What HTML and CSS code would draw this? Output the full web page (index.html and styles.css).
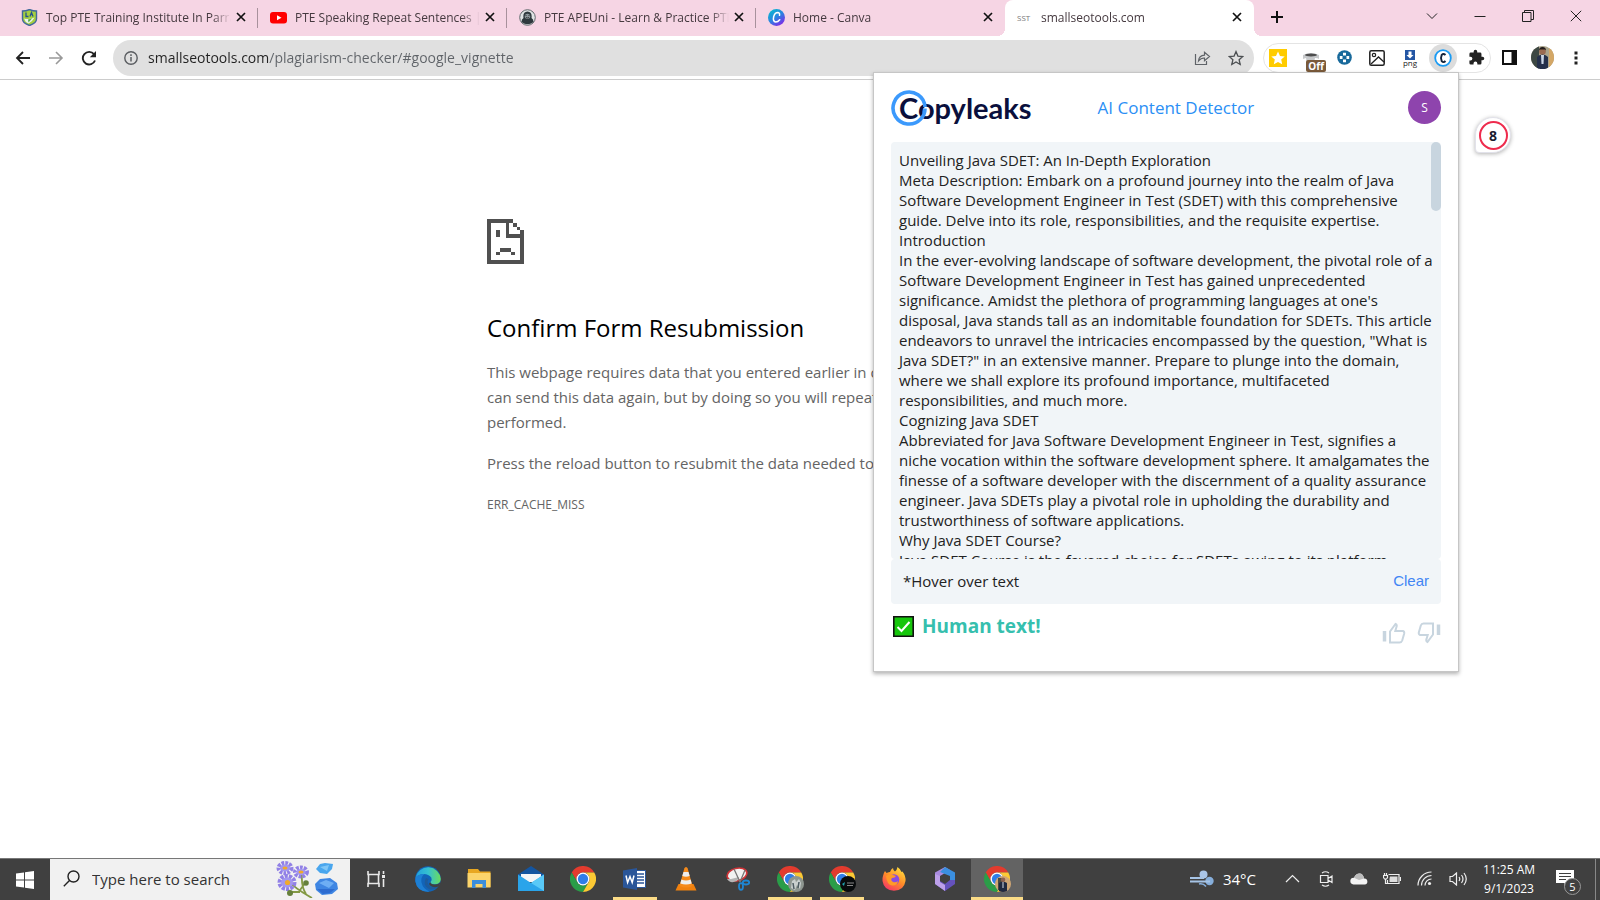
FILE: index.html
```html
<!DOCTYPE html>
<html lang="en">
  <head>
    <meta charset="UTF-8" />
    <meta name="viewport" content="width=device-width, initial-scale=1.0" />
    <title>smallseotools.com</title>
    <link rel="stylesheet" href="styles.css" />
  </head>

  <body>
    <!-- Shared icons -->
    <svg class="sprite" aria-hidden="true">
      <symbol id="icon-close" viewBox="0 0 14 14">
        <path d="M3 3l8 8M11 3l-8 8" fill="none" stroke="#111" stroke-width="1.7" />
      </symbol>
      <symbol id="icon-chrome" viewBox="0 0 48 48">
        <path fill="#e33b2e" d="M24 12h20.8A24 24 0 0 0 3.2 12l10.4 18A12 12 0 0 1 24 12z" />
        <path fill="#2a9d48" d="M34.4 30L24 48A24 24 0 0 1 3.2 12l10.4 18a12 12 0 0 0 20.8 0z" />
        <path fill="#fcc934" d="M24 12h20.8A24 24 0 0 1 24 48l10.4-18A12 12 0 0 0 24 12z" />
        <circle cx="24" cy="24" r="12" fill="#fff" />
        <circle cx="24" cy="24" r="9.5" fill="#2f7de9" />
      </symbol>
    </svg>

    <!-- Tab strip -->
    <header class="tab-strip">
      <div class="tab">
        <svg class="favicon" viewBox="0 0 17 17">
          <path d="M1.500 2Q5 2 8.500.5 12 2 15.500 2v8q0 4-7 6.500Q1.500 14 1.500 10z" fill="#a6cf3f" stroke="#41699c" stroke-width="1.400" />
          <path d="M5 3.500v4h2.500M9 7.500l1.500-4 1.500 4" fill="none" stroke="#24528f" stroke-width="1.300" />
          <path d="M3 9.500q5 1.500 10.500-1-2 4-6 6-3.500-1.500-4.500-5z" fill="#e8f4ee" />
          <path d="M7 10.500l4-1-3.500 4z" fill="#4fa64a" />
        </svg>
        <span class="tab-title">Top PTE Training Institute In Parramatta</span>
        <button class="tab-close" aria-label="Close tab"><svg><use href="#icon-close" /></svg></button>
      </div>
      <div class="tab">
        <svg class="favicon" viewBox="0 0 17 17">
          <rect y="3" width="17" height="11.500" rx="3" fill="#f00" />
          <path d="M7 6.200l4.500 2.500L7 11.200z" fill="#fff" />
        </svg>
        <span class="tab-title">PTE Speaking Repeat Sentences | September</span>
        <button class="tab-close" aria-label="Close tab"><svg><use href="#icon-close" /></svg></button>
      </div>
      <div class="tab">
        <svg class="favicon" viewBox="0 0 17 17">
          <circle cx="8.500" cy="8.500" r="7.800" fill="#dfe3e4" stroke="#60686c" />
          <path d="M2.500 13q0-3 2-4-1-6 4-6.500 5 .5 4 6.500 2 1 2 4-6 4.500-12 0z" fill="#2e383d" />
          <ellipse cx="8.500" cy="7.300" rx="2.700" ry="2.600" fill="#8b969b" />
          <path d="M6.500 6.500h1M9.500 6.500h1M7 8.500q1.500 1 3 0" stroke="#222" fill="none" stroke-width=".8" />
        </svg>
        <span class="tab-title">PTE APEUni - Learn &amp; Practice PTE Online</span>
        <button class="tab-close" aria-label="Close tab"><svg><use href="#icon-close" /></svg></button>
      </div>
      <div class="tab tab-last">
        <svg class="favicon" viewBox="0 0 17 17">
          <defs>
            <linearGradient id="canva" x1="0" y1="0" x2=".7" y2="1">
              <stop offset="0" stop-color="#00c4cc" />
              <stop offset=".55" stop-color="#2b84e0" />
              <stop offset="1" stop-color="#7d2ae8" />
            </linearGradient>
          </defs>
          <circle cx="8.500" cy="8.500" r="8.500" fill="url(#canva)" />
          <path d="M11.500 6.300Q12 4 10 3.600 7 3.500 5.700 7.500 4.600 12.500 7.700 13 10 13 11.700 10.700" fill="none" stroke="#fff" stroke-width="1.500" stroke-linecap="round" />
        </svg>
        <span class="tab-title">Home - Canva</span>
        <button class="tab-close" aria-label="Close tab"><svg><use href="#icon-close" /></svg></button>
      </div>
      <div class="tab tab-active">
        <span class="favicon favicon-text">SST</span>
        <span class="tab-title">smallseotools.com</span>
        <button class="tab-close" aria-label="Close tab"><svg><use href="#icon-close" /></svg></button>
      </div>
      <button class="new-tab" aria-label="New tab">
        <svg width="14" height="14" viewBox="0 0 14 14"><path d="M7 1v12M1 7h12" stroke="#111" stroke-width="2" /></svg>
      </button>
      <div class="window-buttons">
        <button aria-label="Search tabs"><svg width="12" height="12" viewBox="0 0 12 12"><path d="M1 3.500l5 5 5-5" /></svg></button>
        <button aria-label="Minimize"><svg width="12" height="12" viewBox="0 0 12 12"><path d="M.5 6.500h11" /></svg></button>
        <button aria-label="Restore"><svg width="12" height="12" viewBox="0 0 12 12"><path d="M.5 2.500h8.500v9H.5zM2.500 2.500V.5h9v9H9" /></svg></button>
        <button aria-label="Close"><svg width="12" height="12" viewBox="0 0 12 12"><path d="M.8.8l10.400 10.400M11.200.8L.8 11.200" /></svg></button>
      </div>
    </header>

    <!-- Toolbar -->
    <nav class="toolbar">
      <div class="nav-buttons">
        <button aria-label="Back"><svg width="16" height="16" viewBox="0 0 16 16"><path d="M15 8H2M8 2L2 8l6 6" fill="none" stroke="#222" stroke-width="1.800" /></svg></button>
        <button aria-label="Forward"><svg width="16" height="16" viewBox="0 0 16 16"><path d="M1 8h13M8 2l6 6-6 6" fill="none" stroke="#999" stroke-width="1.600" /></svg></button>
        <button aria-label="Reload"><svg width="16" height="16" viewBox="0 0 16 16"><path d="M14 10.500A6.300 6.300 0 1 1 13 4.200" fill="none" stroke="#222" stroke-width="1.900" /><path d="M15 1v6.200H8.800z" fill="#222" /></svg></button>
      </div>
      <div class="address-bar">
        <svg width="14" height="14" viewBox="0 0 14 14"><circle cx="7" cy="7" r="6.200" fill="none" stroke="#5a5d61" stroke-width="1.400" /><path d="M7 6v4.500M7 3.300v1.600" stroke="#5a5d61" stroke-width="1.500" /></svg>
        <input class="url" type="text" aria-label="Address" value="smallseotools.com/plagiarism-checker/#google_vignette" />
        <button aria-label="Share"><svg width="17" height="17" viewBox="0 0 17 17"><path d="M1.500 5v10.500h11V12M4.500 12q.5-5.500 6-5.800V3.300L15.500 7.500l-5 4.200V9q-3.500-.2-6 3z" fill="none" stroke="#5f6368" stroke-width="1.200" /></svg></button>
        <button aria-label="Bookmark this tab"><svg width="16" height="16" viewBox="0 0 16 16"><path d="M8 1.600l1.900 4.500 4.900.4-3.700 3.200 1.100 4.800L8 11.900l-4.200 2.600 1.100-4.800L1.200 6.500l4.900-.4z" fill="none" stroke="#4c4f52" stroke-width="1.300" /></svg></button>
      </div>
      <div class="extensions">
        <button aria-label="Star extension"><svg width="18" height="18" viewBox="0 0 18 18"><path d="M0 0h18v18H0z" fill="#fc0" /><path d="M9 2.500l2 4.400 4.700.5-3.500 3.200 1 4.700L9 12.900l-4.200 2.400 1-4.700-3.500-3.200L7 6.900z" fill="#fff" /></svg></button>
        <button class="off-button" aria-label="Tracker, off">
          <svg width="18" height="12" viewBox="0 0 18 12"><path d="M1 3q8-4 16 0v4q-1-1-4-1l-1 5H5L4 6 1 7z" fill="#c7c9cb" /><ellipse cx="9" cy="3" rx="6" ry="1.500" fill="#4d4d4d" /></svg>
          <span class="off-badge">Off</span>
        </button>
        <button aria-label="Move extension"><svg width="15" height="15" viewBox="0 0 15 15"><circle cx="7.500" cy="7.500" r="7.300" fill="#17699b" /><path d="M6 2.800h3v2.700H6zM6 9.500h3v2.700H6zM2.800 6h2.700v3H2.800zM9.500 6h2.700v3H9.500z" fill="#fff" /></svg></button>
        <button aria-label="Image extension"><svg width="16" height="16" viewBox="0 0 16 16"><rect x=".8" y=".8" width="14.400" height="14.400" rx="1.500" fill="none" stroke="#222" stroke-width="1.500" /><circle cx="5" cy="5" r="1.700" fill="none" stroke="#222" stroke-width="1.200" /><path d="M2 14l7.500-7L15 12" fill="none" stroke="#222" stroke-width="1.300" /></svg></button>
        <button class="png-button" aria-label="Save as png">
          <svg width="10" height="10" viewBox="0 0 10 10"><path d="M0 0h10v10H0z" fill="#2456a4" /><path d="M3.500 1.500h3V5h2L5 8.500 1.500 5h2z" fill="#fff" /></svg>
          <span>png</span>
        </button>
        <button class="extension-active" aria-label="Copyleaks"><svg width="18" height="18" viewBox="0 0 18 18"><circle cx="9" cy="9" r="7.800" fill="#fff" stroke="#1a9bf4" stroke-width="1.800" /><path d="M11.500 6Q9.500 4 7.700 5.800q-1.400 3.200 0 6.300 1.800 2 3.800-.1" fill="none" stroke="#12233c" stroke-width="1.900" /></svg></button>
        <button aria-label="Extensions"><svg width="17" height="17" viewBox="0 0 24 24"><path d="M20.500 11H19V7a2 2 0 0 0-2-2h-4V3.500a2.500 2.500 0 0 0-5 0V5H4a2 2 0 0 0-2 2v3.800h1.500a2.700 2.700 0 0 1 0 5.400H2V20a2 2 0 0 0 2 2h3.800v-1.500a2.700 2.700 0 0 1 5.400 0V22H17a2 2 0 0 0 2-2v-4h1.500a2.500 2.500 0 0 0 0-5z" fill="#222" /></svg></button>
      </div>
      <div class="browser-menu">
        <button aria-label="Side panel"><svg width="15" height="15" viewBox="0 0 15 15"><path d="M1 1h13v13H1z" fill="none" stroke="#111" stroke-width="2" /><path d="M9.500 0H15v15H9.500z" fill="#111" /></svg></button>
        <button aria-label="Profile">
          <svg width="23" height="23" viewBox="0 0 23 23">
            <clipPath id="profile-clip"><circle cx="11.500" cy="11.500" r="11.500" /></clipPath>
            <g clip-path="url(#profile-clip)">
              <path d="M0 0h23v23H0z" fill="#aaa38b" />
              <path d="M0 0h8v23H0z" fill="#3d4843" />
              <path d="M18 0h5v23h-5z" fill="#d4a766" />
              <circle cx="11.500" cy="5.500" r="3.300" fill="#9a6a50" />
              <path d="M8 4.500Q8 1 11.500 1T15 4.500l-1-1H9z" fill="#221c1b" />
              <path d="M6 23V11q2-2.500 5.500-2.500T17 11v12z" fill="#25304b" />
              <path d="M10 9h3l-.5 9h-2z" fill="#cbd6e6" />
            </g>
          </svg>
        </button>
        <button aria-label="Customize and control"><svg width="4" height="16" viewBox="0 0 4 16"><path d="M.5 1.500h3v3h-3zM.5 6.500h3v3h-3zM.5 11.500h3v3h-3z" fill="#222" /></svg></button>
      </div>
    </nav>

    <!-- Page -->
    <main class="page">
      <div class="error-content">
        <svg class="error-icon" width="37" height="45" viewBox="0 0 20 24" shape-rendering="crispEdges">
          <path fill="#505050" d="M0 0h14v2h-2v6h8V6h0v18H0zM2 2v20h16V10h-8V2z" fill-rule="evenodd" />
          <path fill="#505050" d="M14 2h2v2h-2zM16 4h2v2h-2zM18 6h2v2h-2zM5 6h2v3.500H5zM7 15.500h6v2H7zM5 17.500h2v2H5zM13 17.500h2v2h-2z" />
        </svg>
        <h1>Confirm Form Resubmission</h1>
        <p>
          This webpage requires data that you entered earlier in order to be properly displayed. You<br />
          can send this data again, but by doing so you will repeat any action this page previously<br />
          performed.
        </p>
        <p>Press the reload button to resubmit the data needed to load the page.</p>
        <div class="error-code">ERR_CACHE_MISS</div>
      </div>
    </main>

    <!-- Floating counter -->
    <button class="counter"><span class="counter-ring">8</span><span class="counter-grip"></span></button>

    <!-- Copyleaks popup -->
    <section class="popup">
      <div class="popup-header">
        <div class="logo">
          <span class="logo-text">Copyleaks</span>
          <svg class="logo-ring" width="36" height="36" viewBox="0 0 36 36"><path d="M34 17A16 16 0 1 0 29.500 29.200Q34 25 34 18.500" fill="none" stroke="#3b99fc" stroke-width="3.600" /></svg>
        </div>
        <h2>AI Content Detector</h2>
        <button class="user-avatar">S</button>
      </div>
      <div class="result-text">
        <p>Unveiling Java SDET: An In-Depth Exploration</p>
        <p>
          Meta Description: Embark on a profound journey into the realm of Java<br />
          Software Development Engineer in Test (SDET) with this comprehensive<br />
          guide. Delve into its role, responsibilities, and the requisite expertise.
        </p>
        <p>Introduction</p>
        <p>
          In the ever-evolving landscape of software development, the pivotal role of a<br />
          Software Development Engineer in Test has gained unprecedented<br />
          significance. Amidst the plethora of programming languages at one's<br />
          disposal, Java stands tall as an indomitable foundation for SDETs. This article<br />
          endeavors to unravel the intricacies encompassed by the question, "What is<br />
          Java SDET?" in an extensive manner. Prepare to plunge into the domain,<br />
          where we shall explore its profound importance, multifaceted<br />
          responsibilities, and much more.
        </p>
        <p>Cognizing Java SDET</p>
        <p>
          Abbreviated for Java Software Development Engineer in Test, signifies a<br />
          niche vocation within the software development sphere. It amalgamates the<br />
          finesse of a software developer with the discernment of a quality assurance<br />
          engineer. Java SDETs play a pivotal role in upholding the durability and<br />
          trustworthiness of software applications.
        </p>
        <p>Why Java SDET Course?</p>
        <p>Java SDET Course is the favored choice for SDETs owing to its platform</p>
        <span class="scroll-thumb"></span>
      </div>
      <div class="result-footer">
        <span>*Hover over text</span>
        <button class="clear">Clear</button>
      </div>
      <div class="verdict">
        <svg width="21" height="21" viewBox="0 0 21 21"><path d="M.8.8h19.400v19.400H.8z" fill="#16c60c" stroke="#111" stroke-width="1.600" /><path d="M4.500 11l4 4 8-9" fill="none" stroke="#fff" stroke-width="2" /></svg>
        <strong>Human text!</strong>
        <div class="votes">
          <button aria-label="Thumbs up"><svg width="24" height="22" viewBox="0 0 24 22"><path d="M2.500 9v10.500" stroke-width="3.500" /><path d="M8 9.500l5.500-7.500q2 1 .8 3.500l-1 3.500H21q1.500.5 1.200 2.500l-2 7q-.7 2-2.700 2H8z" stroke-width="2" /></svg></button>
          <button aria-label="Thumbs down"><svg width="24" height="22" viewBox="0 0 24 22"><g transform="rotate(180 12 11)"><path d="M2.500 9v10.500" stroke-width="3.500" /><path d="M8 9.500l5.500-7.500q2 1 .8 3.500l-1 3.500H21q1.500.5 1.200 2.500l-2 7q-.7 2-2.700 2H8z" stroke-width="2" /></g></svg></button>
        </div>
      </div>
    </section>

    <!-- Taskbar -->
    <footer class="taskbar">
      <button class="start" aria-label="Start"><svg width="18" height="18" viewBox="0 0 18 18"><path d="M0 2.500L8 1.400V8.500H0zM9 1.200L18 0v8.500H9zM0 9.500h8v7.100L0 15.500zM9 9.500h9V18l-9-1.200z" fill="#fff" /></svg></button>
      <div class="search">
        <svg width="17" height="17" viewBox="0 0 17 17"><circle cx="10.500" cy="6.500" r="5.500" fill="none" stroke="#222" stroke-width="1.400" /><path d="M6.500 10.500L.8 16.200" stroke="#222" stroke-width="1.400" /></svg>
        <input type="text" aria-label="Search" placeholder="Type here to search" />
        <svg class="flowers" width="66" height="38" viewBox="0 0 66 38">
          <path d="M14 20q6 8 24 18M28 14q-1 12 4 20M32 22l-6 8M16 32l10 0" fill="none" stroke="#839944" stroke-width="1.800" />
          <g stroke="#9180e6" fill="none" stroke-width="5">
            <ellipse cx="11" cy="8" rx="6" ry="4.500" stroke-dasharray="2.500 1" />
            <ellipse cx="27" cy="12" rx="5.500" ry="4" stroke-dasharray="2.500 1" />
            <ellipse cx="13" cy="22.500" rx="7" ry="6" stroke-dasharray="3 1" />
          </g>
          <g fill="#a397f0"><ellipse cx="11" cy="8" rx="5" ry="3.500" /><ellipse cx="27" cy="12" rx="4.500" ry="3" /><ellipse cx="13" cy="22.500" rx="6" ry="5" /></g>
          <g fill="#f0a92c"><ellipse cx="11" cy="8" rx="2.500" ry="1.500" /><ellipse cx="27" cy="12" rx="2.500" ry="1.500" /><circle cx="13.500" cy="22.500" r="2.600" /></g>
          <g fill="#66803c"><circle cx="32" cy="23" r="2.800" /><circle cx="16" cy="33" r="3" /></g>
          <path d="M42 9l4-5 5-1 8 1-1 5-5 5-7-1z" fill="#49a6ee" /><path d="M46 7l9-2-2 6z" fill="#7fc6f7" />
          <path d="M41 24l5-5 10-1 7 5 1 6-6 5-10 1-6-5z" fill="#3f86e3" /><path d="M45 23l7-3 8 3-5 5z" fill="#6eaef4" /><path d="M43 29l11 0 7 0-5 4-7 1z" fill="#2d6cd0" />
        </svg>
      </div>
      <div class="apps">
        <button aria-label="Task view"><svg width="18" height="18" viewBox="0 0 18 18"><path d="M1 1v3.500h11V1M1 17v-3.500h11V17M1.500 4.500v9M11.500 4.500v9M16.500 1v3M16.500 9v8" fill="none" stroke="#e8e8e8" stroke-width="1.600" /><path d="M15 5h3v3h-3z" fill="#e8e8e8" /></svg></button>
        <button aria-label="Edge">
          <svg width="26" height="26" viewBox="0 0 26 26">
            <defs><linearGradient id="edge-wave"><stop offset="0" stop-color="#22a0dc" /><stop offset=".5" stop-color="#35c1d1" /><stop offset="1" stop-color="#6bdc5c" /></linearGradient></defs>
            <circle cx="13" cy="13" r="12.800" fill="#1264b8" />
            <path d="M.5 11.500A12.800 12.800 0 0 1 25.800 13q-.3 5-5.300 5.300-5 .2-5-2 2-2.300.8-4.700Q13.500 8 9 8 4 8 .5 11.500z" fill="url(#edge-wave)" />
            <path d="M.5 11.500Q4 7.500 9.500 8q-4 3-3 8.500 1.500 6.500 8 9.100Q2 26.500.3 15z" fill="#1d7fd4" />
            <path d="M11 12q-4 7 3 11 5 2 10-3-5 2.500-9 0-4-3-1.500-7z" fill="#3f4145" opacity=".25" />
            <path d="M15.500 16.300q0 2 4 2.200 4 .2 6-2.500-1 3-2 4.500-5 2-8.500-1-2-2 .5-3.200z" fill="#404040" />
          </svg>
        </button>
        <button aria-label="File Explorer"><svg width="24" height="21" viewBox="0 0 24 21"><path d="M1 1h10l2 2.500h10.500V19H1z" fill="#e8a721" /><path d="M.5 5h23v14.500H.5z" fill="#fbd46b" /><path d="M5 12h14v8h-3.500v-4h-7v4H5z" fill="#3c8edb" /></svg></button>
        <button aria-label="Mail"><svg width="26" height="25" viewBox="0 0 26 25"><path d="M0 8.500L13 0l13 8.500v3H0z" fill="#1455a0" /><path d="M3 8h20v8H3z" fill="#f4f5f7" /><path d="M0 8.500L13 17l13-8.500V25H0z" fill="#2aa4ea" /><path d="M26 8.500V25L9 14.500l4 2.500z" fill="#59c9f7" /></svg></button>
        <button aria-label="Chrome"><svg width="26" height="26"><use href="#icon-chrome" /></svg></button>
        <button class="running" aria-label="Word"><svg width="23" height="22" viewBox="0 0 23 22"><path d="M11 2.500h11.500v17H11z" fill="#fff" stroke="#2a5699" /><path d="M14 6h7M14 9h7M14 12h7M14 15h7" stroke="#2a5699" stroke-width="1.300" /><path d="M0 2.500L14 0v22L0 19.500z" fill="#2a5699" /><path d="M3 7.500l1.600 7L7 8.500l2.200 6L11 7.500" fill="none" stroke="#fff" stroke-width="1.500" /></svg></button>
        <button aria-label="VLC"><svg width="22" height="24" viewBox="0 0 22 24"><path d="M3.500 17h15l3 6.500H.5z" fill="#f0810f" /><path d="M11 0q1.200 0 1.700 1.500L17.500 19q-6.500 3-13 0L9.300 1.500Q9.800 0 11 0z" fill="#f58a1b" /><path d="M8.500 5h5l1.200 4q-3.700 1.500-7.400 0zM6.400 12.500q4.600 2 9.200 0l1.100 4q-5.700 2-11.400 0z" fill="#eee" /></svg></button>
        <button aria-label="Snip"><svg width="24" height="24" viewBox="0 0 24 24"><ellipse cx="11" cy="7.500" rx="10" ry="6.200" fill="#f2f2f2" stroke="#d13438" stroke-width="1.700" transform="rotate(-14 11 7.500)" /><path d="M1 12q3 5 10 2l2-4-8 2z" fill="#b5b5b5" /><path d="M8 2l6 13M19 3l-5 12" stroke="#777" stroke-width="1.300" /><ellipse cx="15" cy="19.500" rx="2" ry="3.300" fill="none" stroke="#1e86d3" stroke-width="1.800" /><ellipse cx="20" cy="15.500" rx="3.200" ry="2" fill="none" stroke="#1e86d3" stroke-width="1.800" /></svg></button>
        <button class="running" aria-label="Chrome, profile 2"><svg width="26" height="26"><use href="#icon-chrome" /></svg><svg class="profile-dot" viewBox="0 0 16 16"><circle cx="8" cy="8" r="8" fill="#8e9690" /><path d="M3 12l1-7 3-2 1 3 3-3 2 4-1 6-3-4-2 5z" fill="#c9cfce" /><path d="M5 7l1 6M11 6l-1 6" stroke="#4d5b61" stroke-width="1.500" /></svg></button>
        <button class="running" aria-label="Chrome, profile 3"><svg width="26" height="26"><use href="#icon-chrome" /></svg><svg class="profile-dot" viewBox="0 0 16 16"><circle cx="8" cy="8" r="8" fill="#080b0c" /><path d="M2 8l3-2-1 4z" fill="#1fa0ac" /><path d="M7 7h7M7 9.500h6" stroke="#888" /></svg></button>
        <button aria-label="Firefox">
          <svg width="24" height="24" viewBox="0 0 24 24">
            <defs><linearGradient id="fox" x1=".8" y1="0" x2=".2" y2="1"><stop offset="0" stop-color="#ffe23f" /><stop offset=".5" stop-color="#ff8b28" /><stop offset="1" stop-color="#f5306b" /></linearGradient></defs>
            <path d="M1 9q.5-3 2-5l1.500 2Q7 5 8 5q1-3 3-4 0 2.500 2 3.500Q15 3 15.500 0q3 2 4 5l1-.5Q24 9 23.500 14 22 23.500 12 23.800 2 23.500.5 14 .2 11 1 9z" fill="url(#fox)" />
            <circle cx="12" cy="12.500" r="5.300" fill="#8a4be0" />
            <path d="M4 9q3-3 7-1l3 1q-1 2-4 2-2 2 1 4 3 1 5-1-1 5-6 4.500Q5 18 4 9z" fill="#ff9a27" />
          </svg>
        </button>
        <button aria-label="Microsoft 365">
          <svg width="22" height="24" viewBox="0 0 22 24">
            <path d="M11 0L1 5.500v11L6 19V9l10-6z" fill="#a98be0" /><path d="M11 0l10 5.500v11l-5-3V9L6 5z" fill="#3b8fe0" /><path d="M21 13v4l-10 7-10-7 5-3 5 3 5-4z" fill="#6552bd" /><path d="M1 7l5 2v6l5 3v6L1 17z" fill="#bda0ea" />
          </svg>
        </button>
        <button class="running focused" aria-label="Chrome, current"><svg width="26" height="26"><use href="#icon-chrome" /></svg><svg class="profile-dot" viewBox="0 0 16 16"><circle cx="8" cy="8" r="8" fill="#cfa675" /><path d="M3 2h5v12H3z" fill="#4a4a40" /><path d="M4 15V7q4-3 8 0v8q-4 2-8 0z" fill="#202940" /><circle cx="8" cy="3.800" r="2.300" fill="#8d6150" /><path d="M7.500 6h1v6h-1z" fill="#d6dbe5" /></svg></button>
      </div>
      <div class="tray">
        <button class="weather">
          <svg width="24" height="17" viewBox="0 0 24 17"><circle cx="13.500" cy="4.500" r="4" fill="#a9c5e8" /><circle cx="19.500" cy="11" r="4.200" fill="#86aedb" /><path d="M0 8h14M0 11.500h20" stroke="#a6c4e6" stroke-width="2" /><path d="M9 14q4-1 7 2.500" stroke="#86aedb" stroke-width="1.500" fill="none" /></svg>
          34°C
        </button>
        <div class="tray-icons">
          <button aria-label="Show hidden icons"><svg width="15" height="9" viewBox="0 0 15 9"><path d="M1 8l6.500-6.500L14 8" /></svg></button>
          <button aria-label="Meet Now"><svg width="14" height="16" viewBox="0 0 14 16"><path d="M1.500 4.500h7.500v7H1.500zM9 7.500l4-2.500v6.500L9 9M3 2q3.500-2.500 7 0M3 14q3.500 2.500 7 0" /></svg></button>
          <button aria-label="OneDrive"><svg width="18" height="12" viewBox="0 0 18 12"><path d="M3.500 11.500a3.400 3.400 0 0 1 .5-6.800Q6 .5 9.500.5T14 5.500a3 3 0 0 1 .7 6z" fill="#f3f3f3" stroke="none" /><path d="M4 4.700Q6 .5 9.500.5T14 5.500L9 7z" fill="#bcbcbc" stroke="none" /></svg></button>
          <button aria-label="Battery"><svg width="18" height="13" viewBox="0 0 18 13"><path d="M5.500 2.500h10.500v9H4.500V8M17.500 5v4M.5 3.500h4v2l-1 1.500h-2l-1-1.500zM1.500 1v2M3.500 1v2M2.500 7v4.500h2" /><path d="M7 4.500h7.500V10H6.500V7z" fill="#ddd" stroke="none" /></svg></button>
          <button aria-label="Network"><svg width="15" height="15" viewBox="0 0 15 15"><path d="M1 14.500A13.500 13.500 0 0 1 14.500 1M4.500 14.500a10 10 0 0 1 10-10M8 14.500A6.500 6.500 0 0 1 14.500 8" /><circle cx="12.500" cy="12.500" r="1.600" fill="#eee" stroke="none" /></svg></button>
          <button aria-label="Volume"><svg width="18" height="14" viewBox="0 0 18 14"><path d="M1 4.500h2.500L7.500 1v12L3.500 9.500H1zM10 5q1.500 2 0 4M12.500 3q3 4 0 8M15 1q4.500 6 0 12" /></svg></button>
        </div>
        <button class="clock"><span>11:25 AM</span><span>9/1/2023</span></button>
        <button class="notifications" aria-label="Notifications">
          <svg width="18" height="17" viewBox="0 0 18 17"><path d="M0 0h18v13h-6l-3.500 4v-4H0z" fill="#fff" /><path d="M3 3.500h12M3 6.500h12M3 9.500h7" stroke="#404040" stroke-width="1.200" /></svg>
          <span class="notification-count">5</span>
        </button>
        <span class="show-desktop"></span>
      </div>
    </footer>
  </body>
</html>
```
FILE: styles.css
```css
/* General Styles */
* {
  box-sizing: border-box;
}

body {
  font-family: "Open Sans", "Noto Sans", sans-serif;
  margin: 0;
  min-height: 100vh;
  display: flex;
  flex-direction: column;
  background-color: #ffffff;
  position: relative;
  overflow: hidden;
}

button {
  font-family: inherit;
  background: none;
  border: none;
  padding: 0;
  cursor: pointer;
  display: flex;
  align-items: center;
  justify-content: center;
}

input {
  font-family: inherit;
  background: none;
  border: none;
  outline: none;
  padding: 0;
}

svg {
  display: block;
  flex-shrink: 0;
}

.sprite {
  position: absolute;
  width: 0;
  height: 0;
}

/* Tab strip */
.tab-strip {
  display: flex;
  height: 36px;
  padding-left: 9px;
  background-color: #f6d5e4;
}

.tab {
  display: flex;
  align-items: center;
  flex: 0 1 249px;
  min-width: 0;
  gap: 8px;
  padding: 0 10px 2px 12px;
  position: relative;
}

.tab::after {
  content: "";
  position: absolute;
  right: 0;
  top: 8px;
  width: 1px;
  height: 20px;
  background-color: #a8919c;
}

.tab-last::after,
.tab-active::after {
  display: none;
}

.favicon {
  width: 17px;
  height: 17px;
}

.favicon-text {
  width: 16px;
  font-size: 8px;
  line-height: 17px;
  color: #777;
}

.tab-title {
  flex: 1;
  min-width: 0;
  margin-right: -5px;
  overflow: hidden;
  white-space: nowrap;
  font-size: 12px;
  color: #45393f;
  mask-image: linear-gradient(to right, #000 90%, transparent);
}

.tab-active {
  background-color: #ffffff;
  border-radius: 8px 8px 0 0;
}

/* Curved feet of the selected tab */
.tab-active::before {
  content: "";
  position: absolute;
  left: -8px;
  right: -8px;
  bottom: 0;
  height: 8px;
  background:
    radial-gradient(circle at 0 0, transparent 8px, #fff 8px) left / 8px 8px no-repeat,
    radial-gradient(circle at 100% 0, transparent 8px, #fff 8px) right / 8px 8px no-repeat;
}

.tab-close svg {
  width: 14px;
  height: 14px;
}

.new-tab {
  width: 46px;
  padding-bottom: 2px;
}

.window-buttons {
  display: flex;
  margin-left: auto;
  padding-bottom: 4px;
}

.window-buttons button {
  width: 48px;
}

.window-buttons path {
  fill: none;
  stroke: #222;
}

/* Toolbar */
.toolbar {
  display: flex;
  align-items: center;
  height: 44px;
  padding: 0 8px 0 6px;
  border-bottom: 1px solid #cccccc;
}

.nav-buttons {
  display: flex;
}

.nav-buttons button {
  width: 33px;
  height: 34px;
}

.address-bar {
  flex: 1;
  display: flex;
  align-items: center;
  gap: 10px;
  height: 36px;
  margin: 0 9px 0 8px;
  padding: 0 7px 0 11px;
  border-radius: 18px;
  background-color: #e0e0e0;
}

.address-bar button {
  width: 23px;
}

.url {
  flex: 1;
  min-width: 0;
  font-size: 14px;
  line-height: 20px;
  color: transparent;
  background: linear-gradient(to right, #222 121px, #5f6368 121px);
  background-clip: text;
}

.extensions {
  display: flex;
  align-items: center;
  gap: 5px;
  height: 30px;
  border: 1px solid #e4e4e4;
  border-radius: 15px;
}

.extensions button {
  width: 28px;
  height: 28px;
}

.off-button {
  position: relative;
}

.off-badge {
  position: absolute;
  right: -1px;
  bottom: 0;
  padding: 0 2px;
  border-radius: 2px;
  background-color: #7a5a3a;
  color: #fff;
  font-size: 10px;
  font-weight: bold;
  line-height: 12px;
}

.extensions .png-button {
  flex-direction: column;
  font-size: 8px;
  line-height: 6px;
  color: #222;
}

.extensions .extension-active {
  border-radius: 50%;
  background-color: #dcdcdc;
}

.browser-menu {
  display: flex;
  margin-left: 2px;
}

.browser-menu button {
  width: 33px;
}

/* Page */
.page {
  flex: 1;
  padding: 139px 20px 0;
}

.error-content {
  max-width: 626px;
  margin: 0 auto;
  color: #646464;
  font-size: 15px;
  line-height: 25px;
  white-space: nowrap;
}

.error-content h1 {
  margin: 46px 0 14px;
  font-size: 24px;
  font-weight: 500;
  line-height: 36px;
  color: #000;
}

.error-content p {
  margin: 0 0 16px;
}

.error-code {
  font-size: 12px;
}

/* Floating counter */
.counter {
  position: absolute;
  right: 89px;
  top: 117px;
  width: 36px;
  height: 36px;
  border: 1px solid #e2e2ea;
  border-radius: 18px 18px 18px 4px;
  background-color: #fff;
  box-shadow: 0 1px 4px rgba(0, 0, 0, 0.3);
}

.counter-ring {
  width: 29px;
  height: 29px;
  border: 2px solid #ee2b4d;
  border-radius: 50%;
  font-size: 14px;
  font-weight: bold;
  line-height: 25px;
  color: #1a1a2e;
}

.counter-grip {
  position: absolute;
  left: 2px;
  bottom: 2px;
  width: 4px;
  height: 6px;
  background: radial-gradient(#aaa 40%, transparent 45%) 0 0 / 2px 2px;
}

/* Copyleaks popup */
.popup {
  position: absolute;
  right: 141px;
  top: 72px;
  width: 586px;
  height: 600px;
  padding: 0 17px;
  background-color: #fff;
  border: 1px solid #c6c6c6;
  box-shadow: 0 2px 4px rgba(0, 0, 0, 0.3);
}

.popup-header {
  display: flex;
  align-items: center;
  height: 69px;
}

.logo {
  position: relative;
  padding-left: 8px;
}

.logo-ring {
  position: absolute;
  left: 0;
  top: 0;
}

.logo-text {
  font-family: Lato, sans-serif;
  font-size: 29px;
  font-weight: bold;
  line-height: 36px;
  color: #0a0f3c;
}

.popup-header h2 {
  margin: 0 auto 0 66px;
  font-size: 17px;
  font-weight: 500;
  color: #2b8ff5;
}

.user-avatar {
  width: 33px;
  height: 33px;
  border-radius: 50%;
  background-color: #8e44ad;
  color: #fff;
  font-size: 12px;
}

.result-text {
  position: relative;
  height: 417px;
  padding: 8px 0 0 8px;
  overflow: hidden;
  border-radius: 4px;
  background-color: #f1f5f8;
  font-size: 15px;
  line-height: 20px;
  white-space: nowrap;
  color: #222;
}

.result-text p {
  margin: 0;
}

.scroll-thumb {
  position: absolute;
  right: 0;
  top: 0;
  width: 10px;
  height: 69px;
  border-radius: 5px;
  background-color: #c8d5df;
}

.result-footer {
  display: flex;
  align-items: center;
  justify-content: space-between;
  height: 45px;
  padding: 0 12px 2px;
  border-radius: 4px;
  background-color: #f1f5f8;
  font-size: 15px;
  color: #222;
}

.clear {
  font-family: "Liberation Sans", Arial, sans-serif;
  font-size: 15px;
  color: #4285f4;
}

.verdict {
  display: flex;
  align-items: center;
  gap: 8px;
  padding: 4px 0 0 2px;
}

.verdict strong {
  font-size: 19px;
  line-height: 30px;
  color: #36bfae;
}

.votes {
  display: flex;
  gap: 11px;
  margin-left: auto;
  padding-top: 14px;
}

.votes path {
  fill: none;
  stroke: #c8d5df;
}

/* Taskbar */
.taskbar {
  display: flex;
  height: 42px;
  border-top: 1px solid #777;
  background-color: #404040;
}

.start {
  width: 50px;
}

.search {
  display: flex;
  align-items: center;
  width: 300px;
  padding: 0 10px 2px 13px;
  background-color: #f1f1f1;
}

.search input {
  flex: 1;
  min-width: 0;
  margin-left: 12px;
  font-size: 15px;
}

.search input::placeholder {
  color: #333;
}

.apps {
  display: grid;
  grid-template-columns: repeat(13, 1fr);
  flex: 0 1 673px;
}

.apps button {
  position: relative;
  padding-bottom: 2px;
}

.running::after {
  content: "";
  position: absolute;
  left: 4px;
  right: 4px;
  bottom: 0;
  height: 3px;
  background-color: #fbdc87;
}

.focused {
  background-color: #636363;
}

.focused::after {
  left: 0;
  right: 0;
}

.profile-dot {
  position: absolute;
  left: 24px;
  top: 17px;
  width: 16px;
  height: 16px;
}

.tray {
  display: flex;
  margin-left: auto;
  color: #fff;
}

.tray button {
  color: inherit;
  padding-bottom: 2px;
}

.weather {
  gap: 9px;
  margin-right: 20px;
  font-size: 15px;
}

.tray-icons {
  display: flex;
}

.tray-icons button {
  width: 33px;
}

.tray-icons svg {
  fill: none;
  stroke: #eee;
  stroke-width: 1.2;
}

.clock {
  flex-direction: column;
  width: 70px;
  font-size: 12px;
  line-height: 19px;
}

.notifications {
  width: 42px;
  position: relative;
}

.notification-count {
  position: absolute;
  left: 20px;
  top: 19px;
  width: 17px;
  height: 17px;
  border: 1px solid #999;
  border-radius: 50%;
  background-color: #404040;
  font-size: 11px;
  line-height: 15px;
}

.show-desktop {
  width: 5px;
  margin-left: 9px;
  border-left: 1px solid #888;
}
```
